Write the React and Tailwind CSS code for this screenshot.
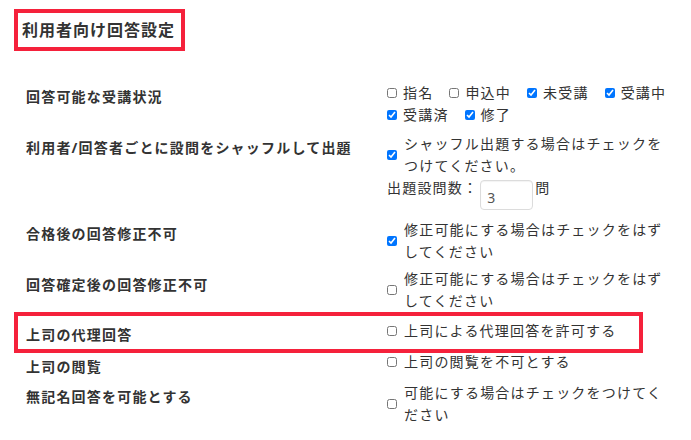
const Check = ({ checked }) => (
    <input type="checkbox" defaultChecked={checked} className="m-0 h-[10px] w-[10px] shrink-0" />
);

const Row = ({ label, labelClass, className, children }) => (
    <div className={`flex ${className}`}>
        <div className={`w-[372px] shrink-0 pl-[12px] font-bold leading-[22px] ${labelClass}`}>{label}</div>
        {children}
    </div>
);

const CheckText = ({ checked, children }) => (
    <div className="flex items-center pl-[1px]">
        <Check checked={checked} />
        <div className="ml-[7px] w-[264px] leading-[22px]">{children}</div>
    </div>
);

const statuses = [
    { name: "指名", checked: false },
    { name: "申込中", checked: false },
    { name: "未受講", checked: true },
    { name: "受講中", checked: true },
    { name: "受講済", checked: true },
    { name: "修了", checked: true },
];

export default function App() {
    return (
        <div className="min-h-screen bg-white pl-[14px] pt-[9px] font-['Noto_Sans','Noto_Sans_CJK_JP',sans-serif] text-[14px] tracking-[1.2px] text-[#333]">
            <div className="flex h-[42px] w-[171px] items-center border-4 border-[#f5213b] pl-[4px] text-[16px] tracking-[1px] font-bold">
                利用者向け回答設定
            </div>

            <Row label="回答可能な受講状況" labelClass="pt-[4px]" className="mt-[31px]">
                <div className="flex w-[292px] flex-wrap gap-x-[16px] pl-[1px] leading-[22px]">
                    {statuses.map((s) => (
                        <label key={s.name} className="flex items-center">
                            <Check checked={s.checked} />
                            <span className="ml-[6px]">{s.name}</span>
                        </label>
                    ))}
                </div>
            </Row>

            <Row label="利用者/回答者ごとに設問をシャッフルして出題" labelClass="pt-[4px]" className="mt-[7px]">
                <div>
                    <CheckText checked>シャッフル出題する場合はチェックをつけてください。</CheckText>
                    <div className="flex items-start pl-[1px]">
                        <span className="leading-[22px]">出題設問数：</span>
                        <div className="ml-[2px] mt-[3px] h-[30px] w-[53px] rounded-[4px] border border-[#dcdcdc] pl-[6px] pt-[6px] leading-[22px] tracking-normal text-[#555] shadow-[inset_0_1px_1px_rgba(0,0,0,0.05)]">
                            3
                        </div>
                        <span className="ml-[2px] leading-[22px]">問</span>
                    </div>
                </div>
            </Row>

            <Row label="合格後の回答修正不可" labelClass="pt-[4px]" className="mt-[9px]">
                <CheckText checked>修正可能にする場合はチェックをはずしてください</CheckText>
            </Row>

            <Row label="回答確定後の回答修正不可" labelClass="pt-[6px]" className="mt-[5px]">
                <CheckText checked={false}>修正可能にする場合はチェックをはずしてください</CheckText>
            </Row>

            <div className="flex h-[41px] w-[629px] border-4 border-[#f5213b]">
                <div className="w-[368px] shrink-0 pl-[8px] pt-[8px] font-bold leading-[22px]">上司の代理回答</div>
                <div className="flex items-center self-start pl-[1px] pt-[4px] leading-[22px]">
                    <Check checked={false} />
                    <span className="ml-[7px]">上司による代理回答を許可する</span>
                </div>
            </div>

            <Row label="上司の閲覧" labelClass="pt-[3px]">
                <div className="flex items-center self-start pl-[1px] leading-[18px]">
                    <Check checked={false} />
                    <span className="ml-[7px]">上司の閲覧を不可とする</span>
                </div>
            </Row>

            <Row label="無記名回答を可能とする" labelClass="pt-[4px]" className="mt-[4px]">
                <CheckText checked={false}>可能にする場合はチェックをつけてください</CheckText>
            </Row>
        </div>
    );
}
